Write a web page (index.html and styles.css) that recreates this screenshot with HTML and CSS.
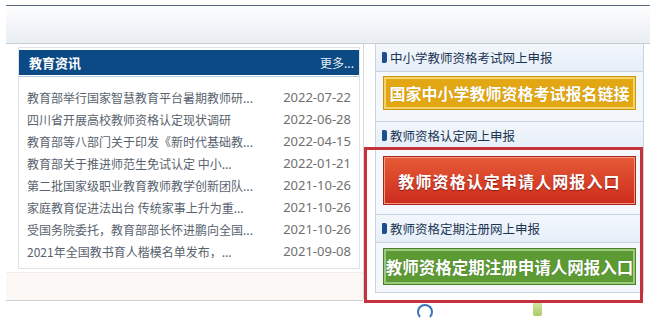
FILE: index.html
```html
<!DOCTYPE html>
<html lang="zh-CN">
<head>
<meta charset="utf-8">
<title>教育资讯</title>
<link rel="stylesheet" href="styles.css">
</head>
<body>
<div class="page">
  <div class="topbar"></div>
  <div class="main">
    <div class="left">
      <div class="panel">
        <div class="panel-head">
          <span class="panel-title">教育资讯</span>
          <span class="more">更多...</span>
        </div>
        <ul class="news">
          <li><span class="t">教育部举行国家智慧教育平台暑期教师研...</span><span class="d">2022-07-22</span></li>
          <li><span class="t">四川省开展高校教师资格认定现状调研</span><span class="d">2022-06-28</span></li>
          <li><span class="t">教育部等八部门关于印发《新时代基础教...</span><span class="d">2022-04-15</span></li>
          <li><span class="t">教育部关于推进师范生免试认定 中小...</span><span class="d">2022-01-21</span></li>
          <li><span class="t">第二批国家级职业教育教师教学创新团队...</span><span class="d">2021-10-26</span></li>
          <li><span class="t">家庭教育促进法出台 传统家事上升为重...</span><span class="d">2021-10-26</span></li>
          <li><span class="t">受国务院委托，教育部部长怀进鹏向全国...</span><span class="d">2021-10-26</span></li>
          <li><span class="t">2021年全国教书育人楷模名单发布，...</span><span class="d">2021-09-08</span></li>
        </ul>
      </div>
      <div class="band"></div>
    </div>
    <div class="right">
      <div class="right-inner">
        <div class="box">
          <div class="sec-head sec-head-line"><span class="mark"></span>中小学教师资格考试网上申报</div>
          <div class="sec-body sec1">
            <div class="btn btn-yellow">国家中小学教师资格考试报名链接</div>
          </div>
          <div class="sec-head sec-head-2"><span class="mark"></span>教师资格认定网上申报</div>
          <div class="sec-body sec2">
            <div class="btn btn-red">教师资格认定申请人网报入口</div>
          </div>
          <div class="sec-head sec-head-line"><span class="mark"></span>教师资格定期注册网上申报</div>
          <div class="sec-body sec3">
            <div class="btn btn-green">教师资格定期注册申请人网报入口</div>
          </div>
        </div>
      </div>
      <div class="icons">
        <span class="ico-blue"></span>
        <span class="ico-green"></span>
      </div>
      <div class="highlight"></div>
    </div>
  </div>
</div>
</body>
</html>
```

FILE: styles.css
```css
* { box-sizing: border-box; }
html {
  overflow: hidden;
}
body {
  margin: 0;
  padding: 0;
  background: #ffffff;
  font-family: "Noto Sans CJK SC", "Noto Sans", "Liberation Sans", sans-serif;
}
.page {
  width: 644px;
  margin-left: 6px;
  padding-top: 5px;
}
.topbar {
  height: 39px;
  border-top: 1px solid #56697c;
  border-bottom: 1px solid #c9cdd1;
  background: linear-gradient(#fdfdfe, #e9eef3);
}
.main {
  display: flex;
  align-items: flex-start;
}
.left {
  width: 357px;
}
.panel {
  margin: 3px 3px 0 12px;
  border: 1px solid #dfe4ea;
  padding-top: 2px;
  background: #ffffff;
}
.panel-head {
  height: 26px;
  background: #0b4a84;
  border-bottom: 1px solid #ffffff;
  display: flex;
  align-items: center;
  justify-content: space-between;
  padding: 0 5px 0 10px;
  color: #ffffff;
}
.panel-title {
  font-size: 13px;
  font-weight: bold;
}
.more {
  font-size: 12px;
  color: #e8eef5;
}
.news {
  list-style: none;
  margin: 0;
  padding: 9px 8px 6px 8px;
  border-top: 1px solid #b5cbe0;
}
.news li {
  height: 22px;
  display: flex;
  align-items: center;
  justify-content: space-between;
}
.news .t {
  font-size: 12px;
  color: #58626d;
  white-space: nowrap;
}
.news .d {
  font-size: 13px;
  color: #707070;
  font-family: "Noto Sans", "Liberation Sans", sans-serif;
}
.band {
  margin-top: 3px;
  height: 29px;
  background: #fcf8f6;
  border-top: 1px solid #f3ece8;
  border-bottom: 1px solid #cfcfcf;
}
.right {
  position: relative;
  width: 287px;
}
.right-inner {
  border-left: 1px solid #d3d8dd;
  padding: 0 6px 6px 11px;
}
.box {
  border: 1px solid #c9d5e2;
  border-top: none;
  background: #eef4fb;
}
.sec-head {
  height: 28px;
  display: flex;
  align-items: center;
  padding-left: 6px;
  font-size: 12.5px;
  color: #1b3553;
  background: linear-gradient(#f2f7fc, #e6eef8);
}
.sec-head-line {
  border-bottom: 1px solid #c6d4e2;
}
.sec-head-2 {
  height: 26px;
}
.mark {
  width: 5px;
  height: 11px;
  background: #1e4e8c;
  border-radius: 1px 2px 2px 1px;
  margin-right: 3px;
}
.sec-body {
  padding: 0 8px;
  border-bottom: 1px solid #c6d4e2;
  background: #f4f8fc;
}
.sec1 { padding-top: 5px; padding-bottom: 12px; }
.sec2 { padding-top: 9px; padding-bottom: 10px; }
.sec3 { padding-top: 6px; padding-bottom: 8px; border-bottom: none; }
.btn {
  display: flex;
  align-items: center;
  justify-content: center;
  color: #ffffff;
  font-weight: bold;
  white-space: nowrap;
}
.btn-yellow {
  height: 32px;
  font-size: 16px;
  background: #e2a712;
  border: 2px solid #f5d46e;
  box-shadow: 0 0 0 1px #c99409;
  text-shadow: 0 0 1px #b98300;
}
.btn-red {
  height: 47px;
  font-size: 16px;
  letter-spacing: 1.1px;
  background: linear-gradient(#e65a36, #cc2c1d);
  border: 1px solid #f29a82;
  box-shadow: 0 0 0 1px #a8221a;
  text-shadow: 0 1px 1px #8c1b12;
}
.btn-green {
  height: 35px;
  font-size: 16.5px;
  background: #5c9b34;
  border: 2px solid #9cc97e;
  box-shadow: 0 0 0 1px #4c8128;
  text-shadow: 0 0 1px #3c6a1e;
}
.icons {
  display: flex;
  align-items: flex-start;
  padding-left: 54px;
  margin-top: 5px;
}
.ico-blue {
  width: 16px;
  height: 16px;
  border-radius: 50%;
  border: 2px solid #3b74b6;
  border-bottom-color: transparent;
}
.ico-green {
  width: 9px;
  height: 14px;
  margin-left: 100px;
  margin-top: -2px;
  background: linear-gradient(#d9e8a6, #a9cb66);
  border-radius: 2px;
}
.highlight {
  position: absolute;
  left: 1px;
  top: 103px;
  width: 279px;
  height: 156px;
  border: 3px solid #c5323c;
  pointer-events: none;
}
```
